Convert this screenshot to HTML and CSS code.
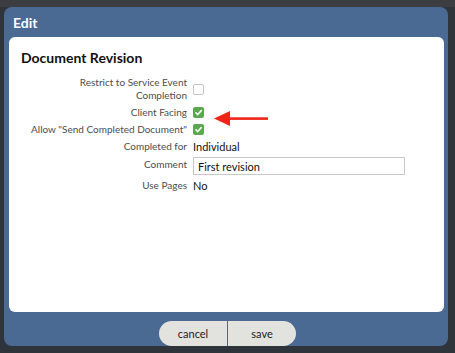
FILE: index.html
```html
<!DOCTYPE html>
<html lang="en">
<head>
    <meta charset="UTF-8">
    <title>Edit</title>
    <link rel="stylesheet" href="styles.css">
</head>
<body>
<div class="backdrop">
    <div class="modal">
        <div class="modal-title">Edit</div>
        <div class="panel">
            <h2>Document Revision</h2>
            <div class="form">
                <div class="label">Restrict to Service Event<br>Completion</div>
                <div class="value"><span class="cb"></span></div>

                <div class="label">Client Facing</div>
                <div class="value"><span class="cb on"><svg viewBox="0 0 10 10"><path d="M2.6 5.2 L4.3 6.9 L7.5 3.3" /></svg></span></div>

                <div class="label">Allow "Send Completed Document"</div>
                <div class="value"><span class="cb on"><svg viewBox="0 0 10 10"><path d="M2.6 5.2 L4.3 6.9 L7.5 3.3" /></svg></span></div>

                <div class="label tall">Completed for</div>
                <div class="value tall">Individual</div>

                <div class="label top">Comment</div>
                <div class="value"><input class="text" type="text" value="First revision"></div>

                <div class="label">Use Pages</div>
                <div class="value">No</div>
            </div>
            <!-- annotation arrow -->
            <svg class="arrow" width="60" height="18" viewBox="0 0 60 18">
                <path d="M0 8.5 L16 1 L16 16 Z" fill="#f0241a"/>
                <rect x="15" y="7.3" width="39" height="2.6" fill="#f0241a"/>
            </svg>
        </div>
        <div class="buttons">
            <button class="btn left">cancel</button><button class="btn right">save</button>
        </div>
    </div>
</div>
</body>
</html>
```

FILE: styles.css
```css
*{
    margin: 0;
    padding: 0;
    box-sizing: border-box;
}
body{
    background: #31363d;
    font-family: Lato, "Noto Sans", sans-serif;
}
.backdrop{
    height: 353px;
    padding: 7px 7px 0 4px;
    background: linear-gradient(#3b3d40 0, #3b3d40 7px, #2f343b 7px);
}
.modal{
    width: 444px;
    height: 339px;
    background: #4a6a94;
    border-radius: 8px;
    padding: 0 4px 0 5px;
    display: flex;
    flex-direction: column;
}
.modal-title{
    height: 30px;
    line-height: 31px;
    padding-left: 4px;
    color: #fff;
    font-weight: bold;
    font-size: 14px;
}
.panel{
    position: relative;
    height: 275px;
    background: #fff;
    border-radius: 6px;
    padding: 12px 12px 0 12px;
}
.panel h2{
    font-size: 14px;
    line-height: 17px;
    font-weight: bold;
    color: #111;
    margin-bottom: 10px;
}
.form{
    display: grid;
    grid-template-columns: 166px 1fr;
    column-gap: 6px;
    row-gap: 3px;
    font-size: 10px;
    line-height: 13px;
}
.label{
    color: #4d4d4d;
    text-align: right;
    display: flex;
    align-items: center;
    justify-content: flex-end;
    min-height: 14px;
    white-space: nowrap;
}
.label.top{
    align-items: flex-start;
    padding-top: 1px;
}
.label + .value{
    display: flex;
    align-items: center;
    color: #111;
    font-size: 11px;
}
.tall{
    line-height: 15px;
}
.cb{
    display: inline-block;
    width: 11px;
    height: 11px;
    border: 1px solid #c4c4c4;
    border-radius: 2px;
    background: #fff;
}
.cb.on{
    border: none;
    background: #5aa84e;
}
.cb svg{
    display: block;
    width: 11px;
    height: 11px;
    fill: none;
    stroke: #fff;
    stroke-width: 1.4;
    stroke-linecap: round;
    stroke-linejoin: round;
}
.text{
    width: 212px;
    height: 18px;
    border: 1px solid #c8c8c8;
    padding: 0 4px;
    font-family: Lato, "Noto Sans", sans-serif;
    font-size: 11px;
    color: #111;
    outline: none;
}
.arrow{
    position: absolute;
    left: 205px;
    top: 73px;
}
.buttons{
    display: flex;
    justify-content: center;
    padding-top: 9px;
    padding-left: 2px;
}
.btn{
    height: 25px;
    width: 68px;
    border: none;
    background: #e2e2de;
    font-family: Lato, "Noto Sans", sans-serif;
    font-size: 11px;
    color: #222;
}
.btn.left{
    border-radius: 13px 0 0 13px;
    margin-right: 1px;
}
.btn.right{
    border-radius: 0 13px 13px 0;
}
```
